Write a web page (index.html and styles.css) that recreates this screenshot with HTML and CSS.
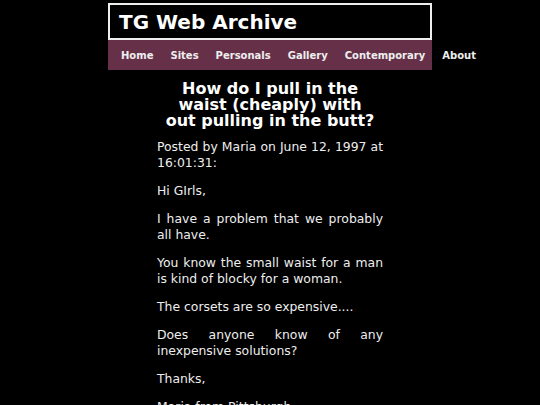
FILE: index.html
```html
<!DOCTYPE html>
<html>
<head>
<meta charset="utf-8">
<link rel="stylesheet" href="styles.css">
</head>
<body>
<div class="site">
  <header class="masthead">
    <div class="title">TG Web Archive</div>
  </header>
  <nav class="nav">
    <a href="#">Home</a>
    <a href="#">Sites</a>
    <a href="#">Personals</a>
    <a href="#">Gallery</a>
    <a href="#">Contemporary</a>
    <a href="#">About</a>
  </nav>
  <main class="post">
    <h1>How do I pull in the waist (cheaply) with out pulling in the butt?</h1>
    <p>Posted by Maria on June 12, 1997 at 16:01:31:</p>
    <p>Hi GIrls,</p>
    <p>I have a problem that we probably all have.</p>
    <p>You know the small waist for a man is kind of blocky for a woman.</p>
    <p>The corsets are so expensive....</p>
    <p>Does anyone know of any inexpensive solutions?</p>
    <p>Thanks,</p>
    <p>Maria from Pittsburgh</p>
  </main>
</div>
</body>
</html>
```

FILE: styles.css
```css
html, body {
  margin: 0;
  padding: 0;
  background: #000;
}
body {
  font-family: "DejaVu Sans", Verdana, sans-serif;
  color: #eee;
}
.site {
  width: 324px;
  margin: 0 auto;
  padding-top: 3px;
}
.masthead {
  border: 2px solid #eee;
  background: #000;
  height: 33px;
  padding-left: 9px;
  display: flex;
  align-items: center;
}
.title {
  font-size: 20px;
  font-weight: bold;
  color: #fff;
}
.nav {
  background: #673049;
  height: 30px;
  display: flex;
  align-items: center;
  padding-left: 4.5px;
  white-space: nowrap;
}
.nav a {
  color: #eee;
  text-decoration: none;
  font-size: 10px;
  font-weight: bold;
  padding: 0 8.5px;
}
.post {
  width: 226px;
  margin: 0 auto;
}
.post h1 {
  font-size: 16px;
  line-height: 16px;
  text-align: center;
  color: #fff;
  margin: 11px 6px 10px;
}
.post p {
  font-size: 12.4px;
  line-height: 16px;
  text-align: justify;
  margin: 0 0 12px;
}
```
